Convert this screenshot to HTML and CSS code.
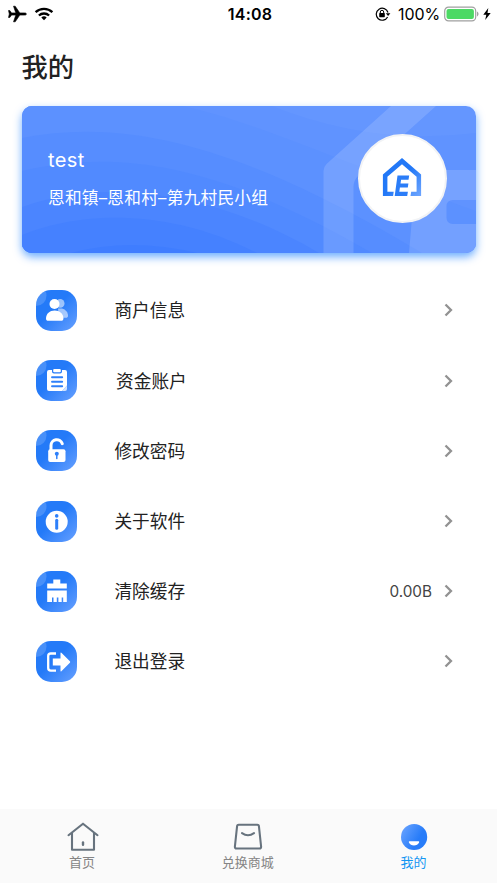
FILE: index.html
```html
<!DOCTYPE html>
<html lang="zh-CN">
<head>
<meta charset="utf-8">
<meta name="viewport" content="width=device-width, initial-scale=1">
<title>我的</title>
<link rel="stylesheet" href="styles.css">
</head>
<body>
<svg class="defs" width="0" height="0" aria-hidden="true">
  <defs>
    <linearGradient id="tile" x1="0" y1="0" x2="1" y2="1">
      <stop offset=".45" stop-color="#247af8"/><stop offset="1" stop-color="#67a0ff"/>
    </linearGradient>
    <clipPath id="tileClip"><rect width="41" height="41" rx="15"/></clipPath>
    <g id="tileBg">
      <rect width="41" height="41" rx="15" fill="url(#tile)"/>
      <circle cx="0" cy="5.5" r="10.5" fill="#fff" opacity=".17" clip-path="url(#tileClip)"/>
    </g>
  </defs>
</svg>
<div class="screen">
  <header class="status">
    <div class="status-left">
      <svg width="19" height="18" viewBox="0 0 19 18"><path stroke="#000" stroke-width=".6" d="M18.400 9c0 .7-.8 1.100-1.800 1.100h-4.800L7.200 16.800H5.500l2.300-6.700H3.600L1.800 12.500H.5L1.300 9 .5 5.500h1.300l1.800 2.400h4.200L5.500 1.200h1.700l4.600 6.700h4.800c1 0 1.800.4 1.800 1.100z"/></svg>
      <svg width="20" height="14" viewBox="0 0 20 14" fill="none" stroke="#000" stroke-width="2.300"><path d="M1.600 5.200a12.300 12.300 0 0 1 16.800 0M4.900 8.500a7.500 7.500 0 0 1 10.200 0"/><path d="M10 13.200 7.300 10.600a4 4 0 0 1 5.400 0z" fill="#000" stroke="none"/></svg>
    </div>
    <div class="clock">14:08</div>
    <div class="status-right">
      <svg width="16" height="14" viewBox="0 0 16 14"><path d="M12.600 10A6 6 0 1 1 13 5.500" fill="none" stroke="#000" stroke-width="1.200"/><path d="M10.800 6.300h4.600L13.100 9z"/><rect x="4.200" y="6" width="5.600" height="4.200" rx=".6"/><path d="M5.300 6.200V5a1.700 1.700 0 0 1 3.400 0v1.200" fill="none" stroke="#000"/></svg>
      <span class="percent">100%</span>
      <svg class="battery" width="35" height="16" viewBox="0 0 35 16"><rect x=".7" y="1.100" width="31" height="13.800" rx="3.800" fill="#fff" stroke="#a0a0a0" stroke-width="1.200"/><rect x="2.500" y="2.900" width="27.400" height="10.200" rx="2" fill="#4cd964"/><path d="M33 5.600c2 .8 2 4 0 4.800z" fill="#a0a0a0"/></svg>
      <svg width="8" height="12" viewBox="0 0 8 12"><path d="M5.300 0 .3 6.800h3L2.200 12l5.500-7h-3.200z"/></svg>
    </div>
  </header>

  <h1 class="title">我的</h1>

  <section class="card">
    <svg class="card-art" viewBox="0 0 454 147" preserveAspectRatio="none" aria-hidden="true">
      <rect width="454" height="147" fill="#6496ff"/>
      <path d="M0 0h250Q350 40 454 27v120H0z" fill="#6093ff"/>
      <path d="M0 0h160C230 14 330 60 454 105v42H0z" fill="#5c91ff"/>
      <path d="M0 32C110 10 230 45 400 147H0z" fill="#568dff"/>
      <path d="M0 65C100 42 200 60 350 147H0z" fill="#518aff"/>
      <path d="M0 101C70 75 180 78 297 147H0z" fill="#4b85ff"/>
      <path d="M0 129C50 108 140 98 235 147H0z" fill="#4581ff"/>
      <path d="M49 147Q108 131 175 147z" fill="#3f7dff"/>
      <path d="M369 0h45l-77 69q-5.500 5-5.500 12v66h-30V65q0-4 3-7z" fill="#fff" opacity=".14"/>
      <path d="M394 64h60v30h-23q-6.500 0-6.500 6.500v11q0 6.500 6.500 6.500h23v29h-67z" fill="#fff" opacity=".14"/>
    </svg>
    <div class="user">
      <div class="name">test</div>
      <div class="group">恩和镇–恩和村–第九村民小组</div>
    </div>
    <div class="avatar">
      <svg width="40" height="40" viewBox="0 0 40 40">
        <defs><linearGradient id="logo" x1="0" y1="0" x2="1" y2="1"><stop offset=".5" stop-color="#2278f7"/><stop offset="1" stop-color="#6fa6ff"/></linearGradient></defs>
        <path fill="url(#logo)" d="M20 1 .9 17.600V39h10.200l.6-4.200H5.400V19.700L20 7.200l14.600 12.500v15.100h-5.400L28.500 39h10.600V17.600z"/>
        <path fill="#2b7df8" d="M15.500 18.500h11.700l-.7 4.200h-7.400l-.6 3.900h7.900l-.6 4h-7.900l-.6 4.200h8.600L25.200 39H12.700z"/>
      </svg>
    </div>
  </section>

  <nav class="menu">
    <a class="row">
      <svg class="tile" viewBox="0 0 41 41"><use href="#tileBg"/><g fill="#fff"><g opacity=".55"><circle cx="24.200" cy="13.400" r="4.300"/><path d="M22 18.500h4c3.800 1 6 4.200 6 7.200 0 1.400-.8 2-2 2h-7z"/></g><circle cx="18.500" cy="14" r="5"/><path d="M10 28.500c0-4.800 3.800-8 8.700-8s8.700 3.200 8.700 8c0 1.600-.8 2.300-2.300 2.300H12.300c-1.500 0-2.300-.7-2.300-2.300z"/></g></svg>
      <span class="label">商户信息</span><svg class="chevron" viewBox="0 0 9 14"><path d="m1.500 1.500 5.500 5.500-5.500 5.500"/></svg>
    </a>
    <a class="row">
      <svg class="tile" viewBox="0 0 41 41"><use href="#tileBg"/><path d="M13 10h3v1.500q0 1.900 1.900 1.900h6.200q1.900 0 1.900-1.900V10h3q2 0 2 2v13.500L26 31H13q-2 0-2-2V12q0-2 2-2z" fill="#fff"/><rect x="17.200" y="9" width="7.600" height="3.200" rx="1" fill="#fff"/><path d="M31 25.500 26 31h3q2 0 2-2z" fill="#fff" opacity=".75"/><path d="M16 17.300h10.200M16 21.800h10.200M16 26.300h10.200" stroke="#2e80fa" stroke-width="1.900" stroke-linecap="round"/></svg>
      <span class="label label-inset">资金账户</span><svg class="chevron" viewBox="0 0 9 14"><path d="m1.500 1.500 5.500 5.500-5.500 5.500"/></svg>
    </a>
    <a class="row">
      <svg class="tile" viewBox="0 0 41 41"><use href="#tileBg"/><path d="M15 20v-4.500a5.800 5.800 0 0 1 11.300-1.800" fill="none" stroke="#fff" stroke-width="3" stroke-linecap="round"/><rect x="12.200" y="19.200" width="17.300" height="12.800" rx="2" fill="#fff"/><circle cx="20.800" cy="23.800" r="2" fill="#2e80fa"/><path d="M20.800 24v4.400" stroke="#2e80fa" stroke-width="1.500" stroke-linecap="round"/></svg>
      <span class="label">修改密码</span><svg class="chevron" viewBox="0 0 9 14"><path d="m1.500 1.500 5.500 5.500-5.500 5.500"/></svg>
    </a>
    <a class="row">
      <svg class="tile" viewBox="0 0 41 41"><use href="#tileBg"/><circle cx="20.700" cy="20.800" r="11" fill="#fff"/><circle cx="20.700" cy="14.900" r="1.800" fill="#2e80fa"/><path d="M20.700 19.200v8" stroke="#2e80fa" stroke-width="3" stroke-linecap="round"/></svg>
      <span class="label">关于软件</span><svg class="chevron" viewBox="0 0 9 14"><path d="m1.500 1.500 5.500 5.500-5.500 5.500"/></svg>
    </a>
    <a class="row">
      <svg class="tile" viewBox="0 0 41 41"><use href="#tileBg"/><path fill="#fff" d="M17.300 8.500h7v4h6.500v5H11.200v-5h6.100zM11.200 19.500h19.600V31h-3.600v-4.500h-1.500V31h-3.300v-4.500h-1.600V31h-3.300v-4.500H16V31h-4.800z"/></svg>
      <span class="label">清除缓存</span><span class="size">0.00B</span><svg class="chevron" viewBox="0 0 9 14"><path d="m1.500 1.500 5.500 5.500-5.500 5.500"/></svg>
    </a>
    <a class="row">
      <svg class="tile" viewBox="0 0 41 41"><use href="#tileBg"/><path d="M20 12.500h-5.200q-2.600 0-2.600 2.600v12q0 2.600 2.600 2.600H20" fill="none" stroke="#fff" stroke-width="2.300"/><path d="M16.800 17.500h7.700v-5.300q0-1.100.9-.4l8.500 8.500q.7.700 0 1.400l-8.500 8.500q-.9.700-.9-.4v-5.300h-7.700z" fill="#fff"/></svg>
      <span class="label">退出登录</span><svg class="chevron" viewBox="0 0 9 14"><path d="m1.500 1.500 5.500 5.500-5.500 5.500"/></svg>
    </a>
  </nav>

  <footer class="tabs">
    <a class="tab">
      <svg width="32" height="30" viewBox="0 0 32 30" fill="none" stroke="#67737e" stroke-width="2.100" stroke-linecap="round" stroke-linejoin="round"><path d="M1.500 13.200 16 1.700l14.500 11.500M5 11v16.700h22V11"/><path d="M16 20.500v2.300" stroke-width="2.400"/></svg>
      <span>首页</span>
    </a>
    <a class="tab">
      <svg width="32" height="30" viewBox="0 0 32 30" fill="none" stroke="#67737e" stroke-width="2.100" stroke-linecap="round" stroke-linejoin="round"><path d="M6.600 2.700h18.800q1.300 0 1.500 1.300l2.200 20.500q.2 2-1.700 2H4.600q-1.900 0-1.700-2L5.100 4q.2-1.300 1.500-1.300z"/><path d="M10 11.200q6 4.200 12 0"/></svg>
      <span>兑换商城</span>
    </a>
    <a class="tab active">
      <svg width="32" height="30" viewBox="0 0 32 30"><defs><linearGradient id="face" x1="0" y1=".1" x2="1" y2=".7"><stop offset="0" stop-color="#6ba4ff"/><stop offset=".7" stop-color="#277cf9"/></linearGradient></defs><circle cx="16.100" cy="15" r="13.100" fill="url(#face)"/><path d="M11.500 19.300h9q1 0 .6 1.100c-1.700 4-8.500 4-10.200 0q-.4-1.100.6-1.100z" fill="#fff"/></svg>
      <span>我的</span>
    </a>
  </footer>
</div>
</body>
</html>
```
FILE: styles.css
```css
* { box-sizing: border-box; }
body {
  margin: 0;
  background: #fff;
  color: #222;
  font-family: Inter, "Noto Sans CJK SC", sans-serif;
}
svg { display: block; flex: none; }
.defs { position: absolute; }
.screen { height: 883px; display: flex; flex-direction: column; overflow: hidden; }

.status {
  height: 27px;
  display: grid;
  grid-template-columns: 1fr auto 1fr;
  align-items: center;
  padding: 0 6px 0 8px;
  color: #000;
}
.status-left { display: flex; align-items: center; gap: 7px; }
.clock { font-size: 16px; font-weight: 600; letter-spacing: .2px; line-height: 27px; padding: 1px 0 0 1px; }
.status-right { display: flex; align-items: center; justify-content: flex-end; }
.percent { margin-left: 7px; padding-top: 1px; font-size: 16px; letter-spacing: -.1px; line-height: 27px; }
.battery { margin: 0 4px; }

.title {
  margin: 22px 0 0 21.5px;
  height: 38px;
  line-height: 38px;
  font-size: 26.300px;
  font-weight: 500;
}

.card {
  position: relative;
  height: 147px;
  margin: 19px 21.5px 0;
  padding: 0 29px 0 26.5px;
  display: flex;
  align-items: center;
  justify-content: space-between;
  border-radius: 10px;
  box-shadow: 0 4px 8px rgba(30, 130, 255, .65);
  color: #fff;
}
.card-art {
  position: absolute;
  inset: 0;
  width: 100%;
  height: 100%;
  border-radius: 10px;
}
.user { position: relative; padding-bottom: 2px; }
.name { font-size: 20px; line-height: 28px; letter-spacing: .4px; }
.group { margin-top: 11px; font-size: 16.700px; letter-spacing: .23px; line-height: 26px; white-space: nowrap; }
.avatar {
  position: relative;
  width: 89px;
  height: 89px;
  margin-top: -3px;
  display: grid;
  place-items: center;
  padding-bottom: 3px;
  border: 2px solid #f2f3f5;
  border-radius: 50%;
  background: #fff;
}

.menu { margin-top: 22.400px; }
.row {
  height: 70.200px;
  padding: 0 44px 0 36px;
  display: flex;
  align-items: center;
}
.tile { width: 41px; height: 41px; }
.label { flex: 1; padding: 2px 0 0 37.400px; font-size: 17.700px; line-height: 26px; }
.label-inset { padding-left: 39px; }
.size { margin-right: 12px; font-size: 15.300px; color: #444; }
.chevron { width: 9px; height: 14px; fill: none; stroke: #929292; stroke-width: 2.300; }

.tabs {
  height: 74px;
  margin-top: auto;
  display: grid;
  grid-template-columns: repeat(3, 1fr);
  background: #fafafa;
}
.tab {
  display: flex;
  flex-direction: column;
  align-items: center;
  padding-top: 12.500px;
  font-size: 13px;
  line-height: 20px;
  color: #858585;
}
.tab span { padding-right: 1.500px; }
.active { color: #1296f3; }
```
